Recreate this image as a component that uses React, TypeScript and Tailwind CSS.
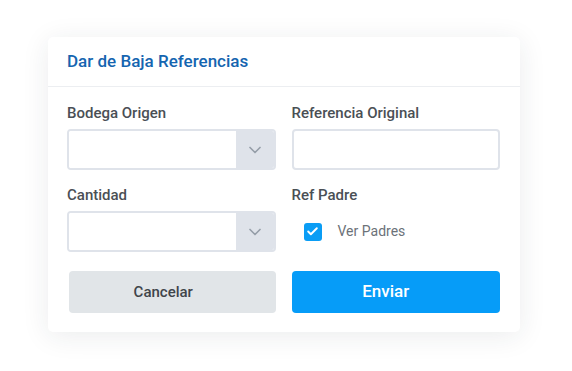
import { Check, ChevronDown } from "lucide-react";

function SelectBox() {
  return (
    <div className="flex h-[41px] rounded-[4px] border-2 border-[#dfe3ea] overflow-hidden">
      <div className="flex-1 bg-white" />
      <div className="w-[38px] bg-[#dfe3ea] flex items-center justify-center">
        <ChevronDown size={20} strokeWidth={2} className="text-[#959ea8]" />
      </div>
    </div>
  );
}

function Label({ children }: { children: React.ReactNode }) {
  return <div className="text-[15px] leading-5 font-medium text-[#4a4f55] mb-1.5">{children}</div>;
}

export default function App() {
  return (
    <div
      className="min-h-screen bg-white flex items-center justify-center"
      style={{ fontFamily: "Roboto, 'Noto Sans', sans-serif" }}
    >
      <div className="w-[472px] bg-white rounded-[5px] shadow-[0_4px_28px_rgba(30,40,60,0.09)] -ml-[4px] -mt-[2px]">
        <div className="h-[50px] flex items-center px-[19px] border-b border-[#eceef1]">
          <h2 className="text-[17px] font-medium text-[#1565b0] mt-[1px]">Dar de Baja Referencias</h2>
        </div>
        <div className="pt-[16px] pb-[19px] pl-[19px] pr-[20px]">
          <div className="grid grid-cols-2 gap-x-4">
            <div>
              <Label>Bodega Origen</Label>
              <SelectBox />
            </div>
            <div>
              <Label>Referencia Original</Label>
              <div className="h-[41px] rounded-[4px] border-2 border-[#dfe3ea] bg-white" />
            </div>
          </div>
          <div className="grid grid-cols-2 gap-x-4 mt-[15px]">
            <div>
              <Label>Cantidad</Label>
              <SelectBox />
            </div>
            <div>
              <Label>Ref Padre</Label>
              <div className="h-[41px] flex items-center pl-3">
                <span className="w-[18px] h-[18px] rounded-[3px] bg-[#0a9df5] flex items-center justify-center">
                  <Check size={13} strokeWidth={3.5} className="text-white" />
                </span>
                <span className="ml-4 text-[14px] text-[#6c7279]">Ver Padres</span>
              </div>
            </div>
          </div>
          <div className="grid grid-cols-2 gap-x-4 mt-[19px]">
            <button className="h-[42px] ml-[2px] pr-[18px] rounded-[4px] bg-[#e1e5e8] text-[15px] font-medium text-[#3f444a]">
              Cancelar
            </button>
            <button className="h-[42px] pr-5 rounded-[4px] bg-[#069cf8] text-[17px] font-medium text-white">
              Enviar
            </button>
          </div>
        </div>
      </div>
    </div>
  );
}
